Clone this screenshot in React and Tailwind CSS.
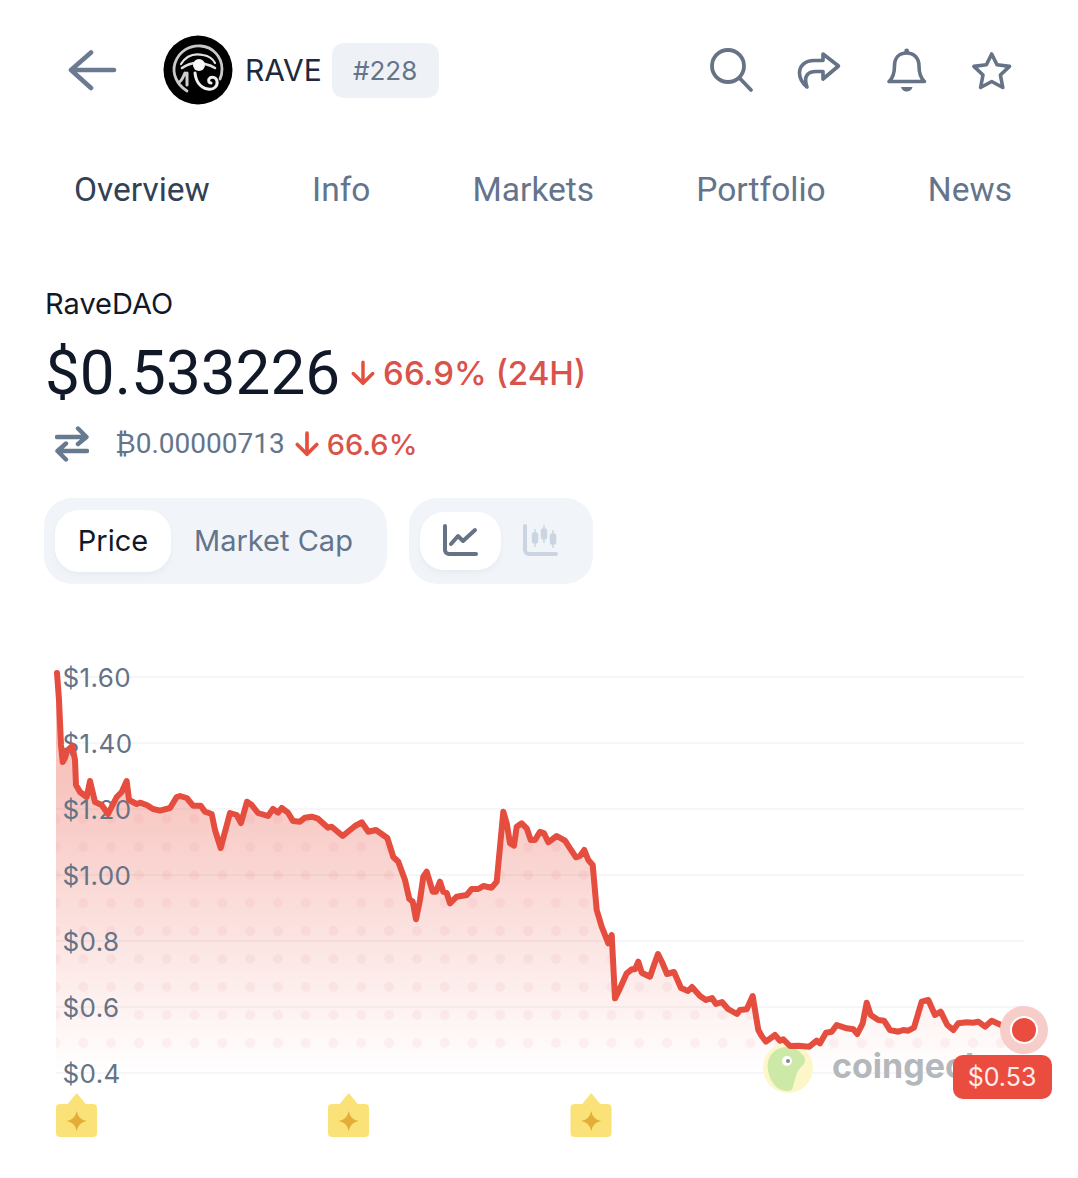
import React from "react";

const PTS = "57,673 59,700 61,745 62.7,762 65,758 67,751 72.3,746 75,760 76,785 80,792 86.7,797 90,781 95,802 101.7,805 108,814 116.7,797 121.7,792 126.7,781 129,800 136.7,804 140,802.7 146.7,805 153,809 160,810.7 170,808 176.7,797 180,796 186.7,798 193,805.7 200.7,805.7 205,811.7 211.7,814 215,830 220.7,848 230,813 236.7,815 241,823 247,801.7 251.7,805 258,813 268,816 273,809 278,812.7 281.7,808 288,812.7 293,821 300,821.7 305,817.7 311.7,816.7 318,818.7 328,827.7 331.7,826.7 342.7,836 355,826 361.7,822.3 368.3,831.7 376,830 387.3,838 393.3,857 398.3,861.7 405,880 409.3,899 412.7,901.7 416,919.3 420,900 423.3,876.7 426.7,871.7 432.7,891.7 436,891.7 440,881.7 443.3,891.7 446.7,893 450,903.3 456.7,896.7 466.7,895 471.7,889 478.3,889 483.3,886 491.7,887.7 496.7,881.7 500,846.7 503.3,811.7 506.7,823.3 510,843.3 514,845.7 516.7,826.7 521.7,823.3 526.7,828.3 530.7,840 535,840 540,831.7 544,833.3 548.3,842.3 556.7,836 565,840.7 570,848.3 576,857.3 580,856 584.3,850 588.3,860 592.7,865 596.7,910 601.7,926.7 608.3,943.3 611.7,935 615,998.3 620,988.3 626.7,973.3 631.7,969.3 635,969.3 638.3,961.7 641.7,972.7 650,976.7 654,965 658,954 662,962 667,974 674,972 681,988 688,991 692,987 700,996 706,1000 712,998 716,1004 722,1002 728,1009 737,1014 740,1010 746.7,1009.3 752.7,996 758.3,1030 761.7,1036 766,1041.7 775,1035 780,1040.7 783.3,1039.3 790,1046 798.3,1045.7 809.3,1046.7 816.7,1040.7 820,1043.3 826,1032.7 831.7,1031.7 836.7,1025 846.7,1028.3 853.3,1029.3 857.3,1034 862.7,1023.3 866.7,1002.7 870.7,1015 878.3,1020 884,1020.7 890,1030 898.3,1031.7 903.3,1030 908.3,1030.7 914,1027.7 921.7,1001.7 928.3,1000 935,1015 940.7,1011.7 947.3,1025 953.3,1030 958.3,1023.3 966.7,1022.3 973,1022.7 978.3,1021.7 985,1026.7 991.7,1020.7 1003.3,1026 1010,1023.3 1019,1030";

const AREA = `56,1074 56,673 ${PTS} 1024,1030 1024,1074`;
const GRID = [
  [677, "$1.60"],
  [743, "$1.40"],
  [809, "$1.20"],
  [875, "$1.00"],
  [941, "$0.8"],
  [1007, "$0.6"],
  [1073, "$0.4"],
];
const TABS = ["Overview", "Info", "Markets", "Portfolio", "News"];
const FONT = "font-['Inter','Liberation_Sans',sans-serif]";
const ROBOTO = "font-['Roboto','Liberation_Sans',sans-serif]";

function Marker({ x }) {
  const c = x + 20.7;
  return (
    <g>
      <path d={`M${c} 1093 L${c + 9} 1104 H${x + 37} a4 4 0 0 1 4 4 V1133 a4 4 0 0 1 -4 4 H${x + 4} a4 4 0 0 1 -4 -4 V1108 a4 4 0 0 1 4 -4 H${c - 9} Z`} fill="#fbe278" />
      <path d={`M${c} 1111 Q${c + 1.5} 1119.5 ${c + 10} 1121 Q${c + 1.5} 1122.5 ${c} 1131 Q${c - 1.5} 1122.5 ${c - 10} 1121 Q${c - 1.5} 1119.5 ${c} 1111 Z`} fill="#e2ae38" />
    </g>
  );
}

function RaveLogo() {
  return (
    <svg width="70" height="70" viewBox="0 0 70 70" className="block shrink-0">
      <circle cx="35" cy="35" r="34.5" fill="#000" />
      <g fill="none" strokeLinecap="round">
        <path d="M24 56 C13 49 9 38 12 28 C16 16 27 10 38 11 C50 12 59 22 59 34 C59 39 58 42 57 44" stroke="#c9c9c9" strokeWidth="2.8" />
        <path d="M18 29 C23 21 31 18 40 20 C46 21 50 24 52 28" stroke="#e4e4e4" strokeWidth="2.2" />
        <path d="M19 33 C26 28 34 27 42 29 C46 30 49 31 52 33" stroke="#e0e0e0" strokeWidth="2.6" />
        <path d="M22 38 C20 42 19 46 16 47 M24 38 L24 50" stroke="#cfcfcf" strokeWidth="3" />
        <path d="M32 38 C33 47 38 53 45 54 C51 55 55 51 54 46 C53 42 48 41 46 44 C45 46 46 48 48 48" stroke="#f0f0f0" strokeWidth="3" />
      </g>
      <circle cx="36" cy="30" r="6" fill="#f8f8f8" />
    </svg>
  );
}

function Chevron() {
  return (
    <svg width="50" height="42" viewBox="67 48 50 42" className="block shrink-0">
      <path d="M71 69 H114 M91 51.5 L71 69 L91 87" fill="none" stroke="#6b7a90" strokeWidth="4.6" strokeLinecap="round" strokeLinejoin="round" />
    </svg>
  );
}

function Down({ size, sw }) {
  return (
    <svg width={size} height={size} viewBox="0 0 24 24" className="block shrink-0">
      <path d="M12 2 V21.5 M3 12.5 L12 21.5 L21 12.5" fill="none" stroke="#e54f3f" strokeWidth={sw} strokeLinecap="round" strokeLinejoin="round" />
    </svg>
  );
}

export default function App() {
  return (
    <div className={`${FONT} w-[1078px] min-h-[1178px] bg-white overflow-hidden`}>
      <header className="h-[140px] pl-[67px] pr-[65px] flex items-center justify-between">
        <div className="flex items-center">
          <Chevron />
          <div className="ml-[46px]"><RaveLogo /></div>
          <span className="ml-[12px] text-[30px] leading-none text-[#1e293b]">RAVE</span>
          <span className="ml-[10px] w-[107px] h-[55px] rounded-[12px] bg-[#eef2f6] flex items-center justify-center text-[26px] text-[#64748b]">#228</span>
        </div>
        <div className="flex items-center">
          <svg width="46" height="48" viewBox="708 46 46 48" className="block">
            <g fill="none" stroke="#667285" strokeWidth="3.8" strokeLinecap="round">
              <circle cx="728" cy="66" r="16" />
              <path d="M739.5 78 L751 90" />
            </g>
          </svg>
          <svg width="46" height="48" viewBox="796 46 46 48" className="block ml-[42px]">
            <path d="M823 54 L838.5 66 L823 79 V71.5 H816 C808 71.5 803 76 807 87 C801 82 799.5 77 799.5 73 C799.5 66 805 60.5 814 60.5 H823 Z" fill="none" stroke="#667285" strokeWidth="3.6" strokeLinecap="round" strokeLinejoin="round" />
          </svg>
          <svg width="42" height="48" viewBox="886 46 42 48" className="block ml-[44px]">
            <path d="M889 81.5 H924.5 C920.5 78 919 72 919 66 C919 58 914 53 906.7 53 C899 53 894.5 58 894.5 66 C894.5 72 893 78 889 81.5 Z" fill="none" stroke="#667285" strokeWidth="3.6" strokeLinejoin="round" />
            <circle cx="906.7" cy="51" r="2.4" fill="#667285" />
            <path d="M901 87 H912.5 C911.5 90.5 909 91.5 906.7 91.5 C904.5 91.5 902 90.5 901 87 Z" fill="#667285" />
          </svg>
          <svg width="42" height="48" viewBox="971 46 42 48" className="block ml-[43px]">
            <path d="M991.7 54 L997 64.8 L1009.5 66.4 L1000.4 75 L1002.8 87.5 L991.7 81.5 L980.6 87.5 L983 75 L973.9 66.4 L986.4 64.8 Z" fill="none" stroke="#667285" strokeWidth="3.6" strokeLinejoin="round" />
          </svg>
        </div>
      </header>

      <nav className={`${ROBOTO} h-[100px] pl-[74px] pr-[66px] flex items-center justify-between text-[33.5px] leading-none text-[#64748b]`}>
        {TABS.map((t, i) => (
          <span key={t} className={i === 0 ? "text-[#334155]" : ""}>{t}</span>
        ))}
      </nav>

      <section className="pt-[44px] pl-[44px]">
        <div className="h-[40px] pl-px flex items-center text-[29px] text-[#111827]">RaveDAO</div>
        <div className="h-[98px] flex items-center pl-px">
          <span className={`${ROBOTO} text-[62px] leading-none text-[#111827]`}>$0.533226</span>
          <span className="ml-[10px]"><Down size={26} sw={3.2} /></span>
          <span className="ml-[7px] text-[33px] font-medium leading-none text-[#d9534a]">66.9% (24H)</span>
        </div>
        <div className="h-[44px] flex items-center pl-px">
          <svg width="34" height="36" viewBox="0 0 34 36" className="block ml-[10px]">
            <path d="M2 11 H31 M23 2.5 L31.5 11 L23 18 M32 25 H3 M11 17.5 L2.5 25 L11 33.5" fill="none" stroke="#667a90" strokeWidth="4.4" strokeLinecap="round" strokeLinejoin="round" />
          </svg>
          <span className={`${ROBOTO} ml-[26px] text-[28px] leading-none text-[#64748b]`}>₿0.00000713</span>
          <span className="ml-[9px]"><Down size={26} sw={3.4} /></span>
          <span className="ml-[7px] text-[29px] font-medium leading-none text-[#d9534a]">66.6%</span>
        </div>
        <div className="mt-[32px] flex gap-[22px]">
          <div className="w-[343px] h-[86px] rounded-[28px] bg-[#f1f5f9] flex items-center pl-[11px]">
            <span className="w-[116px] h-[62px] rounded-[24px] bg-white shadow-md shadow-slate-200/60 flex items-center justify-center text-[29px] text-[#111827]">Price</span>
            <span className="ml-[23px] text-[29px] text-[#64748b]">Market Cap</span>
          </div>
          <div className="w-[184px] h-[86px] rounded-[28px] bg-[#f1f5f9] flex items-center pl-[11px]">
            <span className="w-[81px] h-[58px] rounded-[24px] bg-white shadow-md shadow-slate-200/60 flex items-center justify-center">
              <svg width="38" height="36" viewBox="0 0 38 36" className="block">
                <path d="M3 3 V27 A4 4 0 0 0 7 31 H34 M9 21 L16 13 L21 18 L33 7" fill="none" stroke="#667285" strokeWidth="4" strokeLinecap="round" strokeLinejoin="round" />
              </svg>
            </span>
            <svg width="38" height="36" viewBox="0 0 38 36" className="block ml-[21px]">
              <path d="M3 3 V27 A4 4 0 0 0 7 31 H34" fill="none" stroke="#cbd5e1" strokeWidth="4" strokeLinecap="round" />
              <g fill="#cbd5e1" stroke="#cbd5e1" strokeWidth="1.5">
                <path d="M13 6 V24" fill="none" />
                <rect x="10.5" y="10" width="5" height="10" rx="2" />
                <path d="M22 2 V20" fill="none" />
                <rect x="19.5" y="6" width="5" height="10" rx="2" />
                <path d="M31 7 V25" fill="none" />
                <rect x="28.5" y="11" width="5" height="10" rx="2" />
              </g>
            </svg>
          </div>
        </div>
      </section>

      <svg viewBox="0 650 1078 528" width="1078" height="528" className="block mt-[66px]">
        <defs>
          <linearGradient id="fade" x1="0" y1="780" x2="0" y2="1072" gradientUnits="userSpaceOnUse">
            <stop offset="0" stopColor="#e74c3c" stopOpacity="0.33" />
            <stop offset="0.55" stopColor="#e74c3c" stopOpacity="0.15" />
            <stop offset="1" stopColor="#e74c3c" stopOpacity="0" />
          </linearGradient>
          <pattern id="dots" x="55.5" y="805" width="27.8" height="28" patternUnits="userSpaceOnUse">
            <circle cx="0" cy="14" r="5" fill="#e0607a" fillOpacity="0.08" />
            <circle cx="27.8" cy="14" r="5" fill="#e0607a" fillOpacity="0.08" />
          </pattern>
          <clipPath id="areaClip"><polygon points={AREA} /></clipPath>
        </defs>

        {GRID.map(([y]) => (
          <line key={y} x1="56" x2="1024" y1={y} y2={y} stroke="#f1f3f6" strokeWidth="1.5" />
        ))}
        <polygon points={AREA} fill="url(#fade)" />
        <g clipPath="url(#areaClip)">
          <rect x="56" y="805" width="970" height="245" fill="url(#dots)" />
        </g>

        <circle cx="788" cy="1068" r="25" fill="#fdf6c8" />
        <path d="M768 1070 C766 1058 773 1048 786 1047 C796 1046 800 1052 804 1056 C806 1060 805 1064 801 1067 C796 1072 795 1080 792 1090 C780 1094 770 1084 768 1070 Z" fill="#cde9a8" />
        <circle cx="787" cy="1061" r="5" fill="#fff" />
        <circle cx="788" cy="1061" r="2" fill="#888" />
        <text x="832" y="1078" fontSize="34" fontWeight="700" fill="#b4b7bc" fontFamily="Inter, Liberation Sans, sans-serif">coingecko</text>

        {GRID.map(([y, t]) => (
          <text key={t} x="62.5" y={y + 10} fontSize="26" letterSpacing="0.4" fill="#667285" fontFamily="Inter, Liberation Sans, sans-serif">{t}</text>
        ))}

        <polyline points={PTS.split(" ").slice(0, -1).join(" ")} fill="none" stroke="#e54d3e" strokeWidth="6" strokeLinejoin="round" strokeLinecap="round" />

        <circle cx="1024" cy="1030" r="24" fill="#f6cdc9" />
        <circle cx="1024" cy="1030" r="14" fill="#fff" />
        <circle cx="1024" cy="1030" r="12" fill="#ea4c3f" />

        <rect x="953" y="1055" width="99" height="44" rx="10" fill="#ea4c3f" />
        <text x="1002" y="1086" textAnchor="middle" fontSize="25" fill="#fdecea" fontFamily="Inter, Liberation Sans, sans-serif">$0.53</text>

        <Marker x={56} />
        <Marker x={328} />
        <Marker x={570.5} />
      </svg>
    </div>
  );
}
